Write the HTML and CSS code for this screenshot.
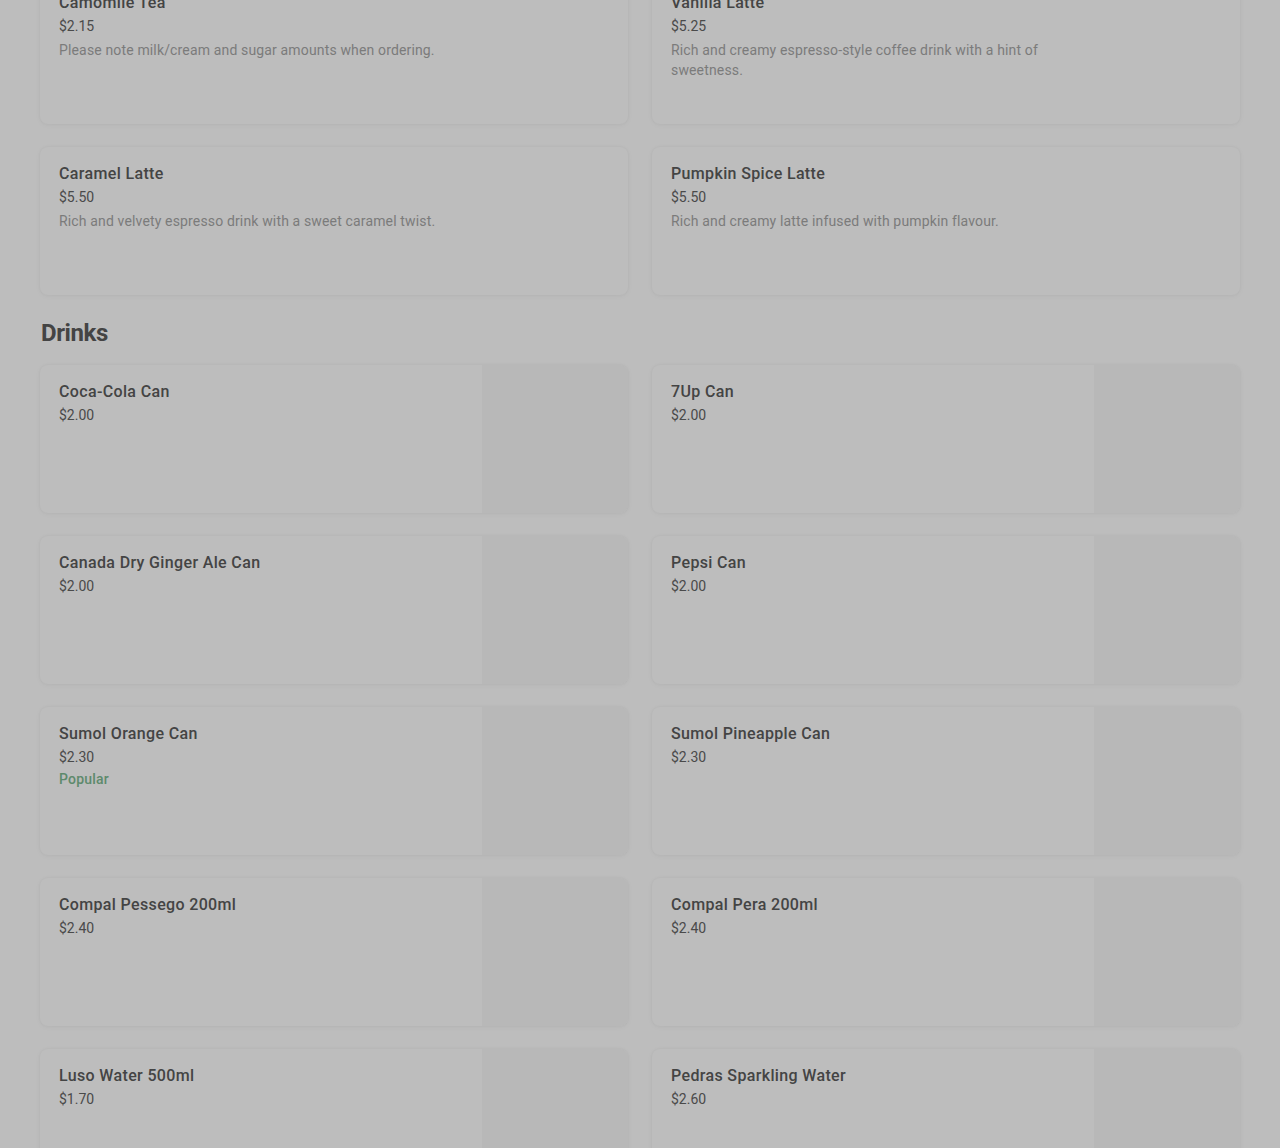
FILE: index.html
```html
<!DOCTYPE html>
<html lang="en">
<head>
    <meta charset="UTF-8">
    <meta name="viewport" content="width=device-width, initial-scale=1.0">
    <title>Menu</title>
    <link rel="stylesheet" href="styles.css">
</head>
<body>
    <div class="menu">
        <div class="item-grid first">
            <div class="item">
                <div class="info">
                    <div class="name">Camomile Tea</div>
                    <div class="price">$2.15</div>
                    <div class="desc">Please note milk/cream and sugar amounts when ordering.</div>
                </div>
                <div class="thumb empty"></div>
            </div>
            <div class="item">
                <div class="info">
                    <div class="name">Vanilla Latte</div>
                    <div class="price">$5.25</div>
                    <div class="desc">Rich and creamy espresso-style coffee drink with a hint of sweetness.</div>
                </div>
                <div class="thumb empty"></div>
            </div>
            <div class="item">
                <div class="info">
                    <div class="name">Caramel Latte</div>
                    <div class="price">$5.50</div>
                    <div class="desc">Rich and velvety espresso drink with a sweet caramel twist.</div>
                </div>
                <div class="thumb empty"></div>
            </div>
            <div class="item">
                <div class="info">
                    <div class="name">Pumpkin Spice Latte</div>
                    <div class="price">$5.50</div>
                    <div class="desc">Rich and creamy latte infused with pumpkin flavour.</div>
                </div>
                <div class="thumb empty"></div>
            </div>
        </div>

        <h2 class="section-title">Drinks</h2>
        <div class="item-grid">
            <div class="item">
                <div class="info">
                    <div class="name">Coca-Cola Can</div>
                    <div class="price">$2.00</div>
                </div>
                <div class="thumb"></div>
            </div>
            <div class="item">
                <div class="info">
                    <div class="name">7Up Can</div>
                    <div class="price">$2.00</div>
                </div>
                <div class="thumb"></div>
            </div>
            <div class="item">
                <div class="info">
                    <div class="name">Canada Dry Ginger Ale Can</div>
                    <div class="price">$2.00</div>
                </div>
                <div class="thumb"></div>
            </div>
            <div class="item">
                <div class="info">
                    <div class="name">Pepsi Can</div>
                    <div class="price">$2.00</div>
                </div>
                <div class="thumb"></div>
            </div>
            <div class="item">
                <div class="info">
                    <div class="name">Sumol Orange Can</div>
                    <div class="price">$2.30</div>
                    <div class="tag">Popular</div>
                </div>
                <div class="thumb"></div>
            </div>
            <div class="item">
                <div class="info">
                    <div class="name">Sumol Pineapple Can</div>
                    <div class="price">$2.30</div>
                </div>
                <div class="thumb"></div>
            </div>
            <div class="item">
                <div class="info">
                    <div class="name">Compal Pessego 200ml</div>
                    <div class="price">$2.40</div>
                </div>
                <div class="thumb"></div>
            </div>
            <div class="item">
                <div class="info">
                    <div class="name">Compal Pera 200ml</div>
                    <div class="price">$2.40</div>
                </div>
                <div class="thumb"></div>
            </div>
            <div class="item">
                <div class="info">
                    <div class="name">Luso Water 500ml</div>
                    <div class="price">$1.70</div>
                </div>
                <div class="thumb"></div>
            </div>
            <div class="item">
                <div class="info">
                    <div class="name">Pedras Sparkling Water</div>
                    <div class="price">$2.60</div>
                </div>
                <div class="thumb"></div>
            </div>
        </div>
    </div>
</body>
</html>
```

FILE: styles.css
```css
body {
    margin: 0;
    background: #bdbdbd;
    font-family: Roboto, "Liberation Sans", sans-serif;
    overflow: hidden;
}

.menu {
    padding: 0 40px;
}

.item-grid {
    display: grid;
    grid-template-columns: 1fr 1fr;
    column-gap: 24px;
    row-gap: 23px;
}

.item-grid.first {
    margin-top: -24px;
}

.item {
    display: flex;
    height: 148px;
    background: #bdbdbd;
    border-radius: 8px;
    overflow: hidden;
    box-shadow: 0 0 3px rgba(0, 0, 0, 0.04), 0 1px 6px rgba(0, 0, 0, 0.035);
}

.info {
    flex: 1;
    padding: 15px 16px 16px 19px;
    min-width: 0;
}

.name {
    font-size: 16px;
    font-weight: 500;
    line-height: 24px;
    letter-spacing: 0.35px;
    color: #444444;
}

.price {
    margin-top: 1px;
    font-size: 14px;
    line-height: 20px;
    color: #4a4a4a;
}

.desc {
    margin-top: 4px;
    font-size: 14px;
    line-height: 20px;
    letter-spacing: 0.15px;
    color: #7b7b7b;
}

.tag {
    margin-top: 2px;
    font-size: 14px;
    font-weight: 500;
    line-height: 20px;
    letter-spacing: 0.2px;
    color: #5d8a6c;
}

.thumb {
    width: 146px;
    flex-shrink: 0;
    background: #b8b8b8;
}

.thumb.empty {
    background: transparent;
}

.section-title {
    margin: 22px 0 16px 1px;
    font-size: 24px;
    font-weight: 700;
    line-height: 32px;
    letter-spacing: -0.4px;
    color: #444444;
}
```
